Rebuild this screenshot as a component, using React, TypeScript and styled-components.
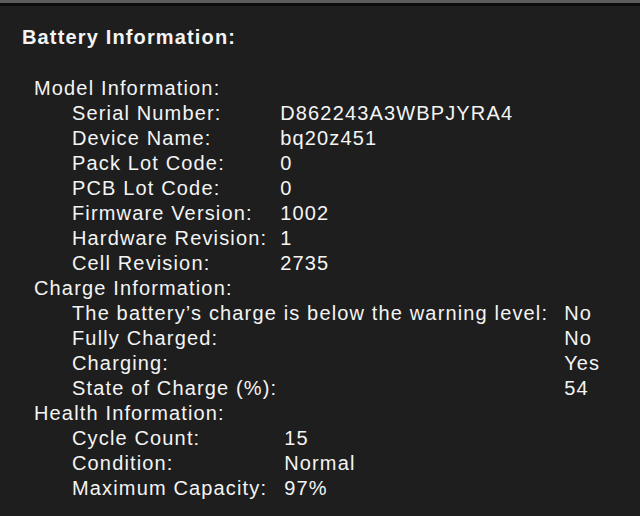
import React from "react";
import styled, { createGlobalStyle } from "styled-components";

const Global = createGlobalStyle`
  html, body { margin: 0; padding: 0; background: #1e1e1e; }
  body { font-family: "Liberation Sans", Arial, sans-serif; }
`;

const Page = styled.div`
  width: 640px;
  height: 516px;
  background: #1e1e1e;
  display: flex;
  flex-direction: column;
  overflow: hidden;
`;

const TopEdge = styled.div`
  height: 3px;
  background: #5c5c5c;
  border-bottom: 3px solid #0b0b0b;
  flex: none;
`;

const Content = styled.div`
  padding: 19px 0 0 22px;
  color: #f4f4f4;
  font-size: 20px;
  line-height: 25px;
  letter-spacing: 1.15px;
`;

const Title = styled.div`
  font-weight: 700;
  margin-bottom: 26px;
`;

const Section = styled.div`
  padding-left: 12px;
`;

const SectionHead = styled.div``;

const Table = styled.div<{ $gap: number }>`
  display: grid;
  grid-template-columns: max-content max-content;
  column-gap: ${(p) => p.$gap}px;
  padding-left: 38px;
`;

const Key = styled.div`
  white-space: nowrap;
`;

const Value = styled.div`
  white-space: nowrap;
`;

type Row = [string, string];

const sections: { title: string; gap: number; rows: Row[] }[] = [
  {
    title: "Model Information:",
    gap: 13,
    rows: [
      ["Serial Number:", "D862243A3WBPJYRA4"],
      ["Device Name:", "bq20z451"],
      ["Pack Lot Code:", "0"],
      ["PCB Lot Code:", "0"],
      ["Firmware Version:", "1002"],
      ["Hardware Revision:", "1"],
      ["Cell Revision:", "2735"],
    ],
  },
  {
    title: "Charge Information:",
    gap: 16,
    rows: [
      ["The battery\u2019s charge is below the warning level:", "No"],
      ["Fully Charged:", "No"],
      ["Charging:", "Yes"],
      ["State of Charge (%):", "54"],
    ],
  },
  {
    title: "Health Information:",
    gap: 17,
    rows: [
      ["Cycle Count:", "15"],
      ["Condition:", "Normal"],
      ["Maximum Capacity:", "97%"],
    ],
  },
];

export default function App() {
  return (
    <Page>
      <Global />
      <TopEdge />
      <Content>
        <Title>Battery Information:</Title>
        {sections.map((s) => (
          <Section key={s.title}>
            <SectionHead>{s.title}</SectionHead>
            <Table $gap={s.gap}>
              {s.rows.map(([k, v]) => (
                <React.Fragment key={k}>
                  <Key>{k}</Key>
                  <Value>{v}</Value>
                </React.Fragment>
              ))}
            </Table>
          </Section>
        ))}
      </Content>
    </Page>
  );
}
